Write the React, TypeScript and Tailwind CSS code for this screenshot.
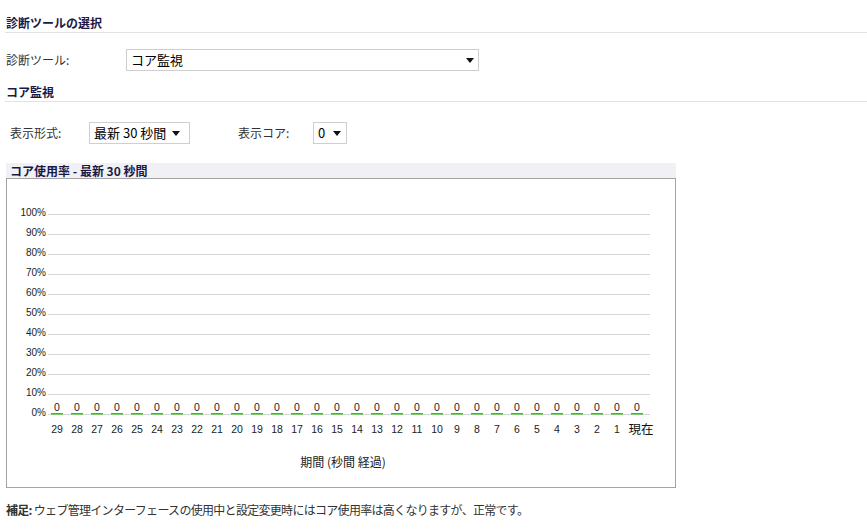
import React from "react";

const Arrow = () => (
  <svg width="8" height="5" viewBox="0 0 8 5" className="shrink-0">
    <path d="M0 0 L8 0 L4 5 Z" fill="#111" />
  </svg>
);

export default function App() {
  const cols = Array.from({ length: 30 }, (_, k) => k);
  const grid = Array.from({ length: 11 }, (_, i) => i);
  return (
    <div className="w-[867px] h-[531px] bg-white text-[12px] text-[#333] font-['Noto_Sans_CJK_JP','Noto_Sans',sans-serif] overflow-hidden">
      <div className="ml-[5px] pt-[15px] pb-[1px] border-b border-[#e2e2e2] px-[1px] leading-[16px] font-bold text-[#191947]">
        診断ツールの選択
      </div>
      <div className="flex items-center mt-[16px] pl-[6px]">
        <div className="w-[120px] leading-[22px]">診断ツール:</div>
        <div className="w-[353px] h-[22px] border border-[#cfcfcf] flex items-center justify-between pl-[4px] pr-[4px] text-[13px] text-black">
          <span>コア監視</span>
          <Arrow />
        </div>
      </div>
      <div className="ml-[5px] mt-[13px] pb-[1px] border-b border-[#e2e2e2] px-[1px] leading-[16px] font-bold text-[#191947]">
        コア監視
      </div>
      <div className="flex items-center mt-[20px] pl-[10px]">
        <div className="w-[79px] leading-[22px]">表示形式:</div>
        <div className="w-[101px] h-[22px] border border-[#cfcfcf] flex items-center justify-between pl-[4px] pr-[9px] text-[13px] text-black">
          <span>最新 30 秒間</span>
          <Arrow />
        </div>
        <div className="ml-[48px] w-[75px] leading-[22px]">表示コア:</div>
        <div className="w-[34px] h-[22px] border border-[#cfcfcf] flex items-center justify-between pl-[4px] pr-[5px] text-[13px] text-black">
          <span>0</span>
          <Arrow />
        </div>
      </div>
      <div className="ml-[6px] w-[670px] mt-[19px]">
        <div className="h-[15px] bg-[#f1f1f5] leading-[15px] pl-[4px] font-bold text-[#191947]">
          コア使用率 - 最新 30 秒間
        </div>
        <div className="h-[310px] border border-[#a3a3a3]">
          <svg width="668" height="308" viewBox="0 0 668 308" className="block">
            {grid.map((i) => (
              <g key={i}>
                <line x1="41" x2="643" y1={35.5 + i * 20} y2={35.5 + i * 20} stroke="#d6d6d6" strokeWidth="1" />
                <text
                  x="39"
                  y={36.5 + i * 20}
                  textAnchor="end"
                  fontSize="10"
                  fontFamily="'Liberation Sans', Arial, sans-serif"
                  fill="#222"
                >
                  {100 - i * 10}%
                </text>
              </g>
            ))}
            {cols.map((k) => (
              <g key={k}>
                <rect x={44 + 20 * k} y="234" width="12" height="1.5" fill="#22cc00" />
                <text
                  x={50 + 20 * k}
                  y="232"
                  textAnchor="middle"
                  fontSize="10.5"
                  fontFamily="'Liberation Sans', Arial, sans-serif"
                  fill="#222"
                >
                  0
                </text>
                {k < 29 ? (
                  <text
                    x={50 + 20 * k}
                    y="254"
                    textAnchor="middle"
                    fontSize="10.5"
                    fontFamily="'Liberation Sans', Arial, sans-serif"
                    fill="#222"
                  >
                    {29 - k}
                  </text>
                ) : (
                  <text
                    x={634}
                    y="255"
                    textAnchor="middle"
                    fontSize="12.5"
                    fontFamily="'Noto Sans CJK JP', sans-serif"
                    fill="#111"
                  >
                    現在
                  </text>
                )}
              </g>
            ))}
            <text
              x="336"
              y="288"
              textAnchor="middle"
              fontSize="12"
              fontFamily="'Noto Sans CJK JP', sans-serif"
              fill="#222"
            >
              期間 (秒間 経過)
            </text>
          </svg>
        </div>
      </div>
      <div className="mt-[14px] pl-[6px] leading-[16px] tracking-[-0.7px]">
        <span className="font-bold">補足:</span> ウェブ管理インターフェースの使用中と設定変更時にはコア使用率は高くなりますが、正常です。
      </div>
    </div>
  );
}
